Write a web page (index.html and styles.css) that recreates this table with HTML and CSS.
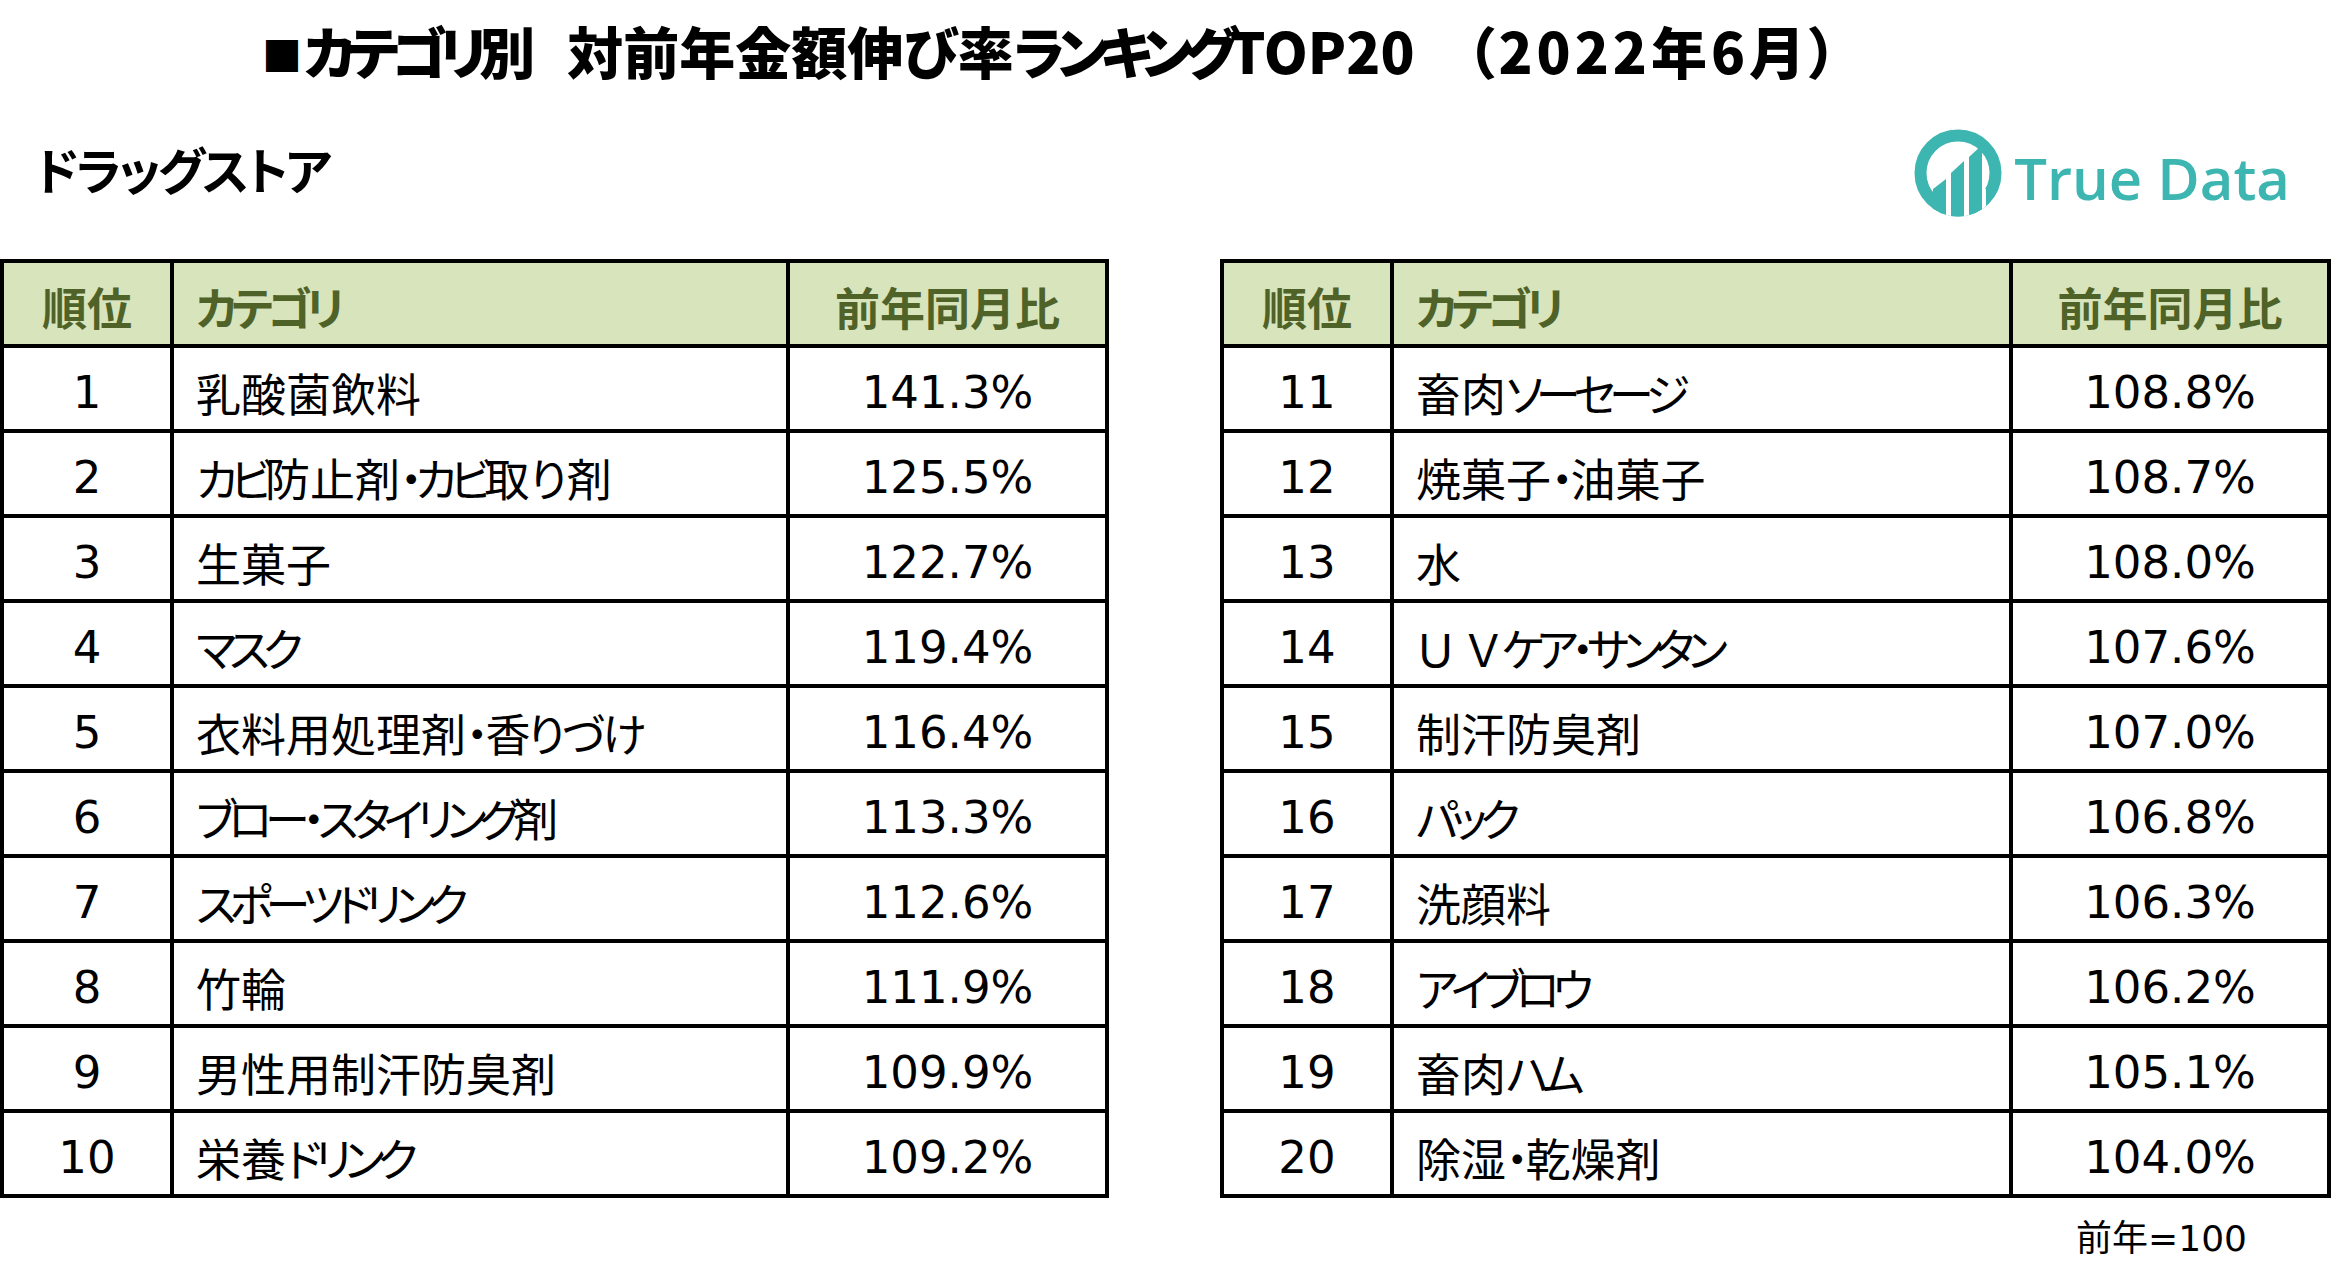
FILE: index.html
```html
<!DOCTYPE html>
<html lang="ja">
<head>
<meta charset="utf-8">
<title>カテゴリ別 対前年金額伸び率ランキングTOP20</title>
<link rel="stylesheet" href="styles.css">
</head>
<body>
<div class="page">
  <h1 class="title"><span class="seg"><span class="sq">■</span><span class="kana">カテゴリ</span>別</span><span class="seg mid">対前年金額伸び率<span class="kana">ランキング</span>TOP20</span><span class="seg date">（2022年6月）</span></h1>
  <div class="subhead">
    <div class="channel">ドラッグストア</div>
    <div class="logo">
      <svg class="logo-mark" viewBox="0 0 88 88" aria-hidden="true">
        <defs><clipPath id="lc"><circle cx="44" cy="44" r="43.5"/></clipPath></defs>
        <circle cx="44" cy="44" r="37.5" fill="none" stroke="#3db5b0" stroke-width="12"/>
        <g clip-path="url(#lc)">
          <rect x="32" y="40" width="5" height="50" fill="#fff"/>
          <rect x="50" y="22" width="5" height="68" fill="#fff"/>
          <rect x="68" y="60" width="4" height="30" fill="#fff"/>
          <polygon points="19,60 32,50 32,90 19,90" fill="#3db5b0"/>
          <polygon points="37,44 50,32 50,90 37,90" fill="#3db5b0"/>
          <polygon points="55,28 68,16 68,90 55,90" fill="#3db5b0"/>
        </g>
      </svg>
      <span class="logo-text">True Data</span>
    </div>
  </div>
  <div class="tables">
    <div class="rank-table left">
      <div class="cell head rank">順位</div><div class="cell head cat"><span class="kana">カテゴリ</span></div><div class="cell head val">前年同月比</div>
      <div class="cell rank">1</div><div class="cell cat">乳酸菌飲料</div><div class="cell val">141.3%</div>
      <div class="cell rank">2</div><div class="cell cat"><span class="kana">カビ</span>防止剤<span class="kana">・カビ</span>取り剤</div><div class="cell val">125.5%</div>
      <div class="cell rank">3</div><div class="cell cat">生菓子</div><div class="cell val">122.7%</div>
      <div class="cell rank">4</div><div class="cell cat"><span class="kana">マスク</span></div><div class="cell val">119.4%</div>
      <div class="cell rank">5</div><div class="cell cat">衣料用処理剤<span class="hira">・香りづけ</span></div><div class="cell val">116.4%</div>
      <div class="cell rank">6</div><div class="cell cat"><span class="kana">ブロー・スタイリング</span>剤</div><div class="cell val">113.3%</div>
      <div class="cell rank">7</div><div class="cell cat"><span class="kana">スポーツドリンク</span></div><div class="cell val">112.6%</div>
      <div class="cell rank">8</div><div class="cell cat">竹輪</div><div class="cell val">111.9%</div>
      <div class="cell rank">9</div><div class="cell cat">男性用制汗防臭剤</div><div class="cell val">109.9%</div>
      <div class="cell rank">10</div><div class="cell cat">栄養<span class="kana">ドリンク</span></div><div class="cell val">109.2%</div>
    </div>
    <div class="rank-table right">
      <div class="cell head rank">順位</div><div class="cell head cat"><span class="kana">カテゴリ</span></div><div class="cell head val">前年同月比</div>
      <div class="cell rank">11</div><div class="cell cat">畜肉<span class="kana">ソーセージ</span></div><div class="cell val">108.8%</div>
      <div class="cell rank">12</div><div class="cell cat">焼菓子<span class="hira">・</span>油菓子</div><div class="cell val">108.7%</div>
      <div class="cell rank">13</div><div class="cell cat">水</div><div class="cell val">108.0%</div>
      <div class="cell rank">14</div><div class="cell cat">Ｕ Ｖ<span class="kana">ケア・サンタン</span></div><div class="cell val">107.6%</div>
      <div class="cell rank">15</div><div class="cell cat">制汗防臭剤</div><div class="cell val">107.0%</div>
      <div class="cell rank">16</div><div class="cell cat"><span class="kana">パック</span></div><div class="cell val">106.8%</div>
      <div class="cell rank">17</div><div class="cell cat">洗顔料</div><div class="cell val">106.3%</div>
      <div class="cell rank">18</div><div class="cell cat"><span class="kana">アイブロウ</span></div><div class="cell val">106.2%</div>
      <div class="cell rank">19</div><div class="cell cat">畜肉<span class="kana">ハム</span></div><div class="cell val">105.1%</div>
      <div class="cell rank">20</div><div class="cell cat">除湿<span class="hira">・</span>乾燥剤</div><div class="cell val">104.0%</div>
    </div>
  </div>
  <div class="note">前年=100</div>
</div>
</body>
</html>
```
FILE: styles.css
```css
html, body {
  margin: 0;
  padding: 0;
  background: #ffffff;
}

.page {
  width: 2332px;
  height: 1281px;
  overflow: hidden;
  font-family: "Noto Sans CJK JP", sans-serif;
  color: #000000;
}

/* ---------- title ---------- */
.title {
  margin: 0;
  padding: 20px 0 0 262px;
  font-size: 56px;
  line-height: 60px;
  font-weight: 900;
  font-feature-settings: "palt";
  white-space: nowrap;
}

.title .sq {
  font-size: 40px;
  vertical-align: 3px;
  margin-right: 2px;
}

.title .kana {
  letter-spacing: -8px;
}

.title .mid {
  margin-left: 32px;
}

.title .date {
  margin-left: 52px;
  letter-spacing: 4px;
}

/* ---------- sub heading + logo ---------- */
.subhead {
  display: flex;
  justify-content: space-between;
  align-items: center;
  height: 100px;
  margin-top: 39px;
  padding: 0 42px 0 35px;
}

.channel {
  font-size: 50px;
  line-height: 1;
  font-weight: 700;
  font-feature-settings: "palt";
  letter-spacing: -3px;
  padding-bottom: 10px;
}

.logo {
  display: flex;
  align-items: center;
  gap: 12px;
}

.logo-mark {
  width: 88px;
  height: 88px;
  display: block;
}

.logo-text {
  font-family: "Open Sans", sans-serif;
  font-size: 58px;
  line-height: 1;
  font-weight: 600;
  color: #3db5b0;
  margin-top: 10px;
}

/* ---------- tables ---------- */
.tables {
  display: flex;
  gap: 111px;
  margin-top: 36px;
}

.rank-table {
  display: grid;
  grid-auto-rows: 85px;
  border-left: 4px solid #000;
  border-top: 4px solid #000;
}

.rank-table.left {
  grid-template-columns: 170px 616px 319px;
}

.rank-table.right {
  grid-template-columns: 170px 619px 318px;
}

.cell {
  box-sizing: border-box;
  border-right: 4px solid #000;
  border-bottom: 4px solid #000;
  display: flex;
  align-items: center;
  padding-top: 8px;
  font-size: 45px;
  line-height: 45px;
  white-space: nowrap;
}

.cell.rank,
.cell.val {
  justify-content: center;
  font-family: "DejaVu Sans", "Noto Sans CJK JP", sans-serif;
}

.cell.cat {
  padding-left: 22px;
  font-family: "Noto Sans CJK JP", sans-serif;
  font-feature-settings: "palt";
}

.cell.cat .kana {
  letter-spacing: -7px;
}

.cell.cat .hira {
  letter-spacing: -3px;
}

.cell.head {
  background: #d8e4bc;
  color: #4f6228;
  font-family: "Noto Sans CJK JP", sans-serif;
  font-weight: 700;
  padding-top: 6px;
}

.cell.head .kana {
  letter-spacing: -6px;
}

/* ---------- footnote ---------- */
.note {
  margin-top: 21px;
  padding-right: 85px;
  text-align: right;
  font-family: "DejaVu Sans", "Noto Sans CJK JP", sans-serif;
  font-size: 36px;
  line-height: 40px;
}
```
